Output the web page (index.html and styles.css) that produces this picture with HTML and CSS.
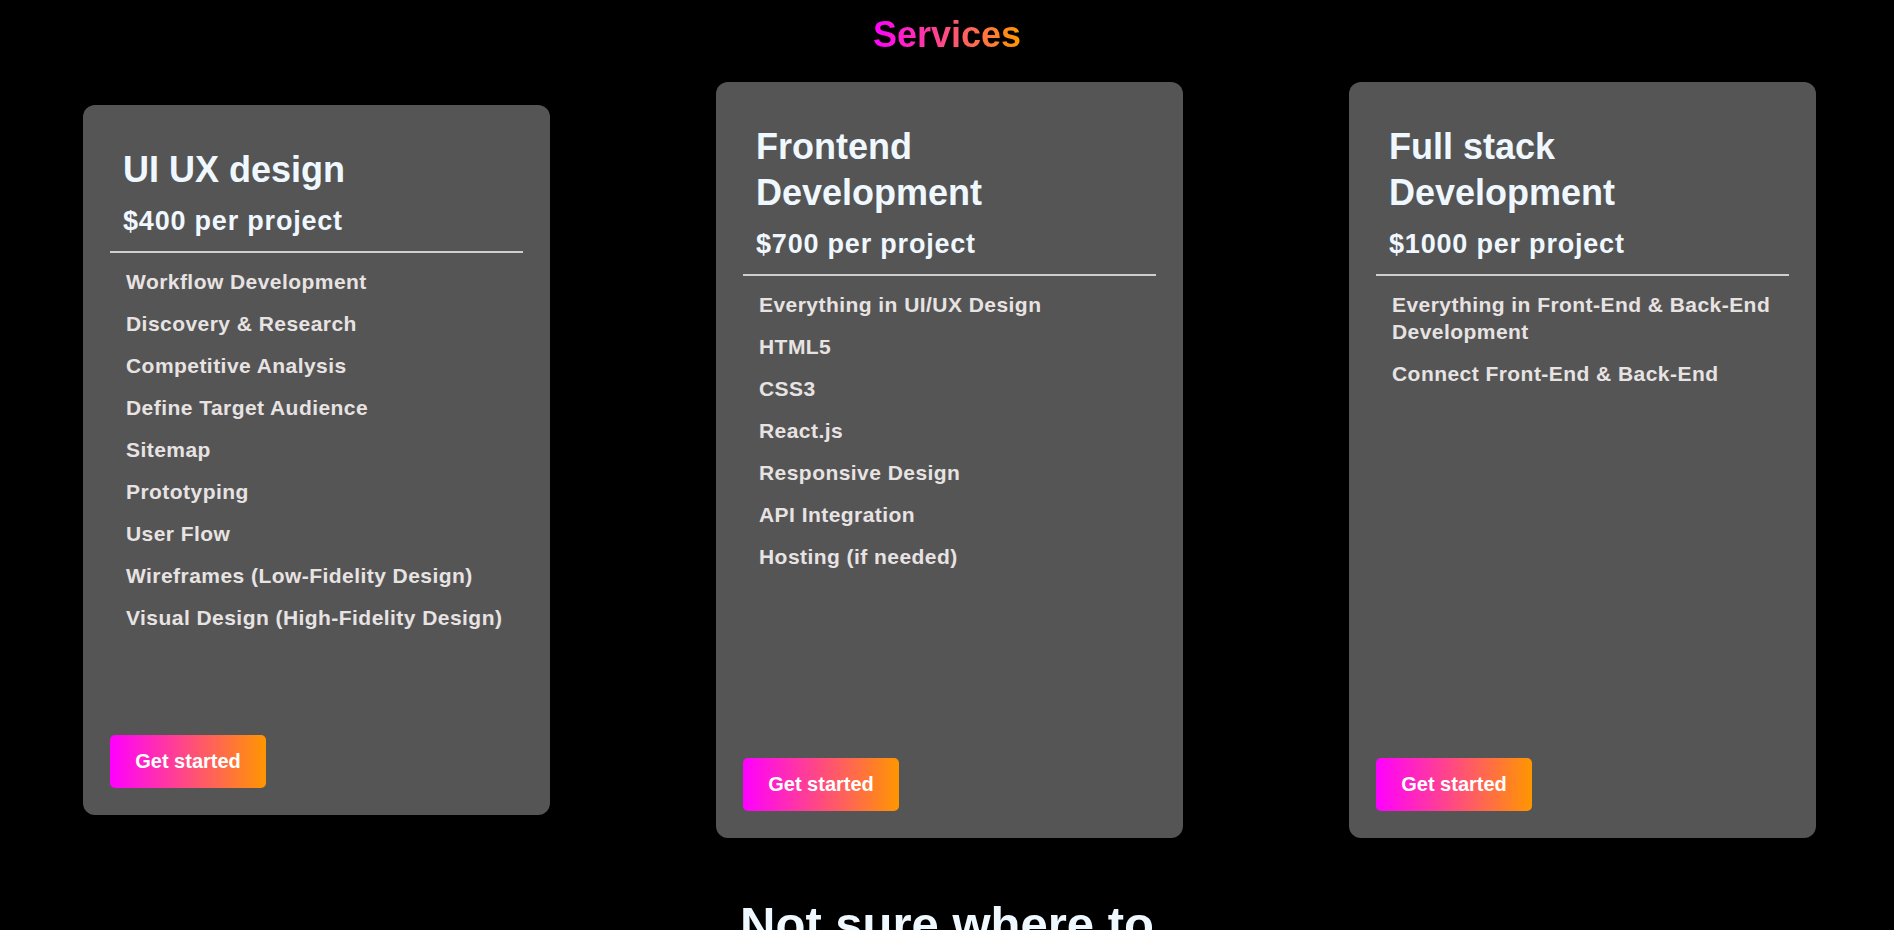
FILE: index.html
```html
<!DOCTYPE html>
<html lang="en">
<head>
<meta charset="utf-8">
<title>Services</title>
<link rel="stylesheet" href="styles.css">
</head>
<body>
<section class="services">
  <div class="services-head">
    <h1 class="services-title">Services</h1>
  </div>
  <div class="cards">
    <div class="card">
      <h2 class="card-title">UI UX design</h2>
      <h3 class="card-price">$400 per project</h3>
      <div class="divider"></div>
      <ul class="features">
        <li>Workflow Development</li>
        <li>Discovery &amp; Research</li>
        <li>Competitive Analysis</li>
        <li>Define Target Audience</li>
        <li>Sitemap</li>
        <li>Prototyping</li>
        <li>User Flow</li>
        <li>Wireframes (Low-Fidelity Design)</li>
        <li>Visual Design (High-Fidelity Design)</li>
      </ul>
      <button class="cta">Get started</button>
    </div>
    <div class="card">
      <h2 class="card-title">Frontend Development</h2>
      <h3 class="card-price">$700 per project</h3>
      <div class="divider"></div>
      <ul class="features">
        <li>Everything in UI/UX Design</li>
        <li>HTML5</li>
        <li>CSS3</li>
        <li>React.js</li>
        <li>Responsive Design</li>
        <li>API Integration</li>
        <li>Hosting (if needed)</li>
      </ul>
      <button class="cta">Get started</button>
    </div>
    <div class="card">
      <h2 class="card-title">Full stack Development</h2>
      <h3 class="card-price">$1000 per project</h3>
      <div class="divider"></div>
      <ul class="features">
        <li>Everything in Front-End &amp; Back-End Development</li>
        <li>Connect Front-End &amp; Back-End</li>
      </ul>
      <button class="cta">Get started</button>
    </div>
  </div>
</section>
<section class="help">
  <h2 class="help-title">Not sure where to</h2>
</section>
</body>
</html>
```
FILE: styles.css
```css
html {
  overflow: hidden;
}
body {
  margin: 0;
  background: #000;
  font-family: "Liberation Sans", Arial, sans-serif;
}
.services-head {
  padding-top: 13px;
  text-align: center;
}
.services-title {
  display: inline-block;
  margin: 0;
  font-size: 36px;
  line-height: 44px;
  font-weight: 700;
  background: linear-gradient(to right, #ff00ff, #ff9a00);
  -webkit-background-clip: text;
  background-clip: text;
  color: transparent;
}
.cards {
  display: flex;
  align-items: center;
  gap: 166px;
  padding: 0 83px;
  margin-top: 25px;
}
.card {
  width: 467px;
  flex-shrink: 0;
  box-sizing: border-box;
  padding: 42px 27px 27px;
  background: #555555;
  border-radius: 12px;
  display: flex;
  flex-direction: column;
}
.card-title {
  margin: 0;
  padding-left: 13px;
  max-width: 320px;
  font-size: 36px;
  line-height: 45.5px;
  font-weight: 700;
  color: #f0f8ff;
}
.card-price {
  margin: 14px 0 0;
  padding-left: 13px;
  font-size: 27px;
  line-height: 30px;
  font-weight: 700;
  letter-spacing: 0.8px;
  color: #f0f8ff;
}
.divider {
  margin-top: 14.5px;
  height: 2px;
  background: #cfcfcf;
}
.features {
  list-style: none;
  margin: 0;
  padding: 0 0 0 16px;
  height: 482px;
  box-sizing: border-box;
}
.features li {
  margin-top: 15px;
  font-size: 21px;
  line-height: 27px;
  font-weight: 700;
  letter-spacing: 0.45px;
  color: #e8e3e3;
}
.cta {
  align-self: flex-start;
  width: 156px;
  height: 53px;
  padding: 0;
  border: none;
  border-radius: 5px;
  background: linear-gradient(to right, #ff00ff, #ff9600);
  color: #fff;
  font-family: "Liberation Sans", Arial, sans-serif;
  font-size: 20px;
  font-weight: 700;
}
.help {
  margin-top: 57px;
}
.help-title {
  margin: 0;
  text-align: center;
  font-size: 49px;
  line-height: 58px;
  font-weight: 700;
  color: #f0f8ff;
}
```
